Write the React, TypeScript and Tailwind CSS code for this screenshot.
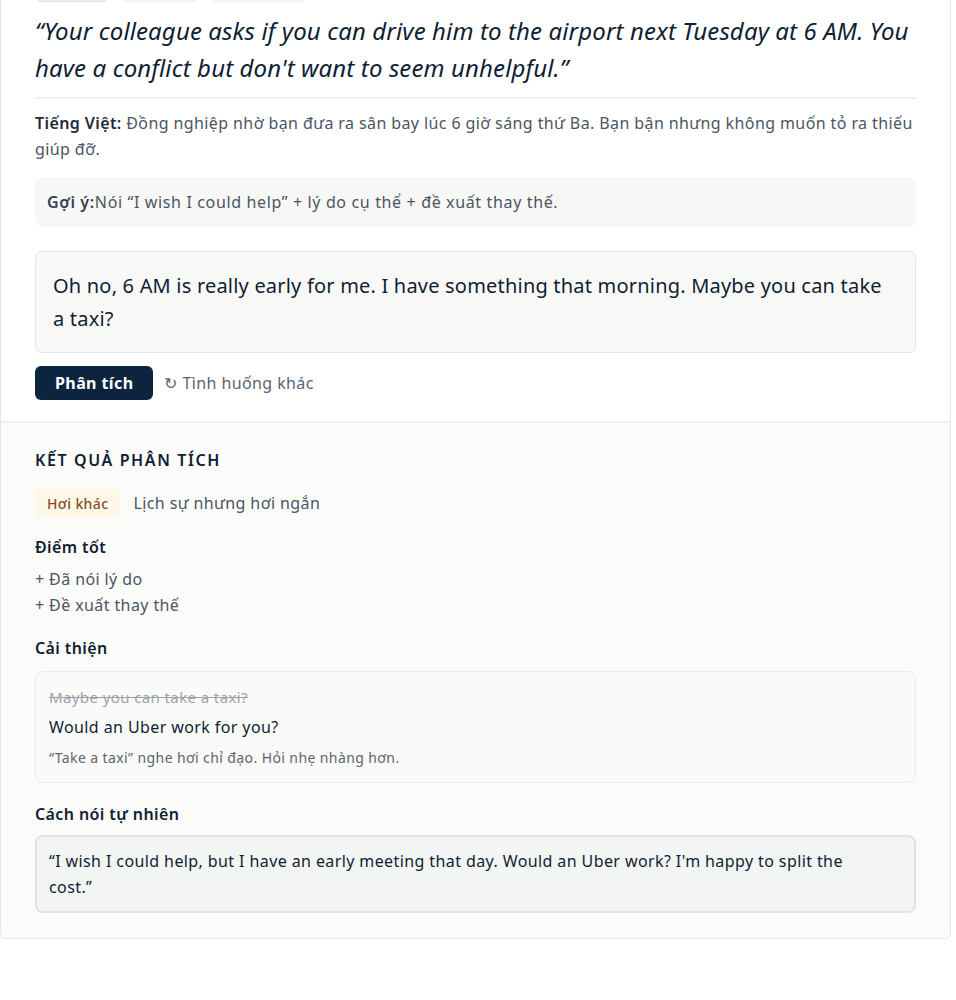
import React from "react";

const font = { fontFamily: '"Noto Sans", "Open Sans", sans-serif' };

function ScenarioTabs() {
  return (
    <div className="flex gap-3 -mt-[28px] mb-[10px]">
      <div className="h-[30px] w-[74px] rounded-md border border-[#dfe4ea] bg-[#eef1f4]" />
      <div className="h-[30px] w-[77px] rounded-md border border-[#eeeff1] bg-[#f7f7f7]" />
      <div className="h-[30px] w-[96px] rounded-md border border-[#eeeff1] bg-[#f7f7f7]" />
    </div>
  );
}

function PracticePanel() {
  return (
    <div className="px-[34px] pb-[21px] bg-white">
      <ScenarioTabs />
      <p className="text-[24px] leading-[37px] italic tracking-[0.005em] text-[#0f1e33] pb-[11px] border-b-2 border-[#edf0f3]">
        “Your colleague asks if you can drive him to the airport next Tuesday at 6 AM. You have a conflict but don't want to seem unhelpful.”
      </p>
      <p className="mt-[11px] text-[16px] leading-[26px] tracking-[0.025em] text-[#4b5563]">
        <span className="font-semibold text-[#1f2937]">Tiếng Việt:</span> Đồng nghiệp nhờ bạn đưa ra sân bay lúc 6 giờ sáng thứ Ba. Bạn bận nhưng không muốn tỏ ra thiếu giúp đỡ.
      </p>
      <div className="mt-[15px] rounded-lg bg-[#f7f7f5] px-3 py-3 text-[16px] leading-[26px] tracking-[0.04em] text-[#4b5563]">
        <span className="font-semibold text-[#374151]">Gợi ý:</span>Nói “I wish I could help” + lý do cụ thể + đề xuất thay thế.
      </div>
      <div className="mt-[24px] rounded-md border border-[#e6e6e6] bg-[#f8f8f7] px-[17px] py-[17px] text-[20px] leading-[33px] tracking-[0.01em] text-[#0f1e33]">
        Oh no, 6 AM is really early for me. I have something that morning. Maybe you can take a taxi?
      </div>
      <div className="mt-[13px] flex items-center gap-[11px] tracking-[0.025em]">
        <button className="h-[34px] rounded-md bg-[#0b2540] px-5 text-[16px] font-bold text-white">
          Phân tích
        </button>
        <button className="text-[16px] text-[#5b6472]">↻ Tình huống khác</button>
      </div>
    </div>
  );
}

function ResultPanel() {
  return (
    <div className="border-t-2 border-[#eeeff1] bg-[#fbfbf9] px-[34px] pt-[25px] pb-[25px] tracking-[0.025em]">
      <h2 className="text-[16px] leading-[24px] font-semibold uppercase tracking-[0.1em] text-[#0f1e33]">
        Kết quả phân tích
      </h2>
      <div className="mt-[17px] flex items-center gap-[13px]">
        <span className="flex h-[28px] items-center rounded-md bg-[#fdf8e6] px-3 text-[14px] font-medium text-[#8a4a2c]">
          Hơi khác
        </span>
        <span className="text-[16px] text-[#4b5563]">Lịch sự nhưng hơi ngắn</span>
      </div>
      <h3 className="mt-[18px] text-[16px] leading-[24px] font-semibold text-[#0f1e33]">Điểm tốt</h3>
      <ul className="mt-[7px] text-[16px] leading-[26px] text-[#4b5563]">
        <li>+ Đã nói lý do</li>
        <li>+ Đề xuất thay thế</li>
      </ul>
      <h3 className="mt-[18px] text-[16px] leading-[24px] font-semibold text-[#0f1e33]">Cải thiện</h3>
      <div className="mt-[11px] rounded-lg border border-[#ebebeb] bg-[#fafaf9] px-[13px] pt-[14px] pb-[14px]">
        <p className="text-[15px] leading-[22px] text-[#9ca3af] line-through">Maybe you can take a taxi?</p>
        <p className="mt-[7px] text-[16px] leading-[24px] text-[#0f1e33]">Would an Uber work for you?</p>
        <p className="mt-[9px] text-[14px] leading-[20px] text-[#5b6472]">
          “Take a taxi” nghe hơi chỉ đạo. Hỏi nhẹ nhàng hơn.
        </p>
      </div>
      <h3 className="mt-[19px] text-[16px] leading-[24px] font-semibold text-[#0f1e33]">Cách nói tự nhiên</h3>
      <div className="mt-[9px] rounded-lg border-2 border-[#dfe2e6] bg-[#f3f4f4] pl-[12px] pr-[40px] py-[11px] text-[16px] leading-[26px] text-[#0f1e33]">
        “I wish I could help, but I have an early meeting that day. Would an Uber work? I'm happy to split the cost.”
      </div>
    </div>
  );
}

export default function App() {
  return (
    <div className="min-h-[1000px] bg-white overflow-hidden" style={font}>
      <div className="w-[951px] overflow-hidden rounded-b-md border-x border-b border-[#e3e6ea]">
        <PracticePanel />
        <ResultPanel />
      </div>
    </div>
  );
}
